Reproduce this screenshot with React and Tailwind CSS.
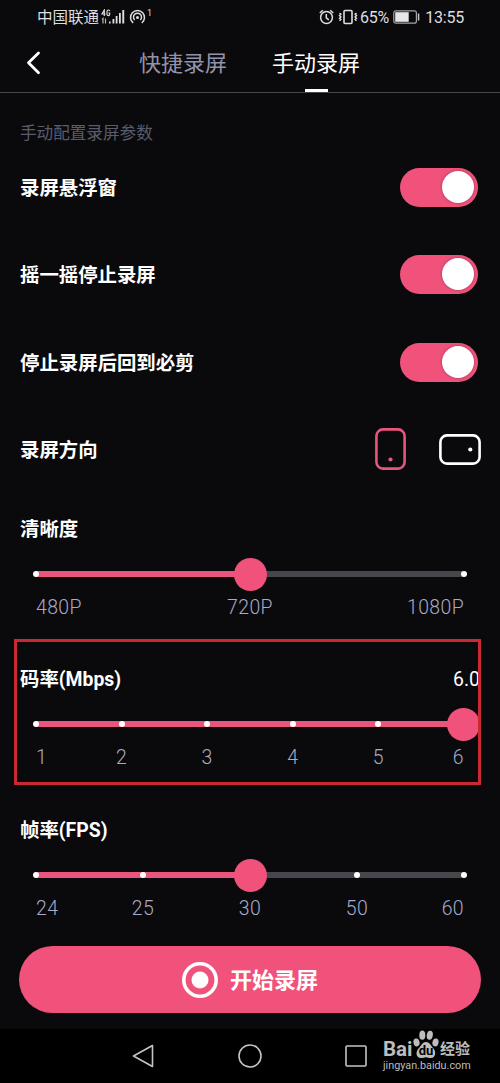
import { useState } from "react";

const SWITCHES = [
  { id: "float", label: "录屏悬浮窗", height: "h-[87px]" },
  { id: "shake", label: "摇一摇停止录屏", height: "h-[87px]" },
  { id: "back", label: "停止录屏后回到必剪", height: "h-[88px]" },
];

const StatusBar = () => (
  <div className="flex h-[34px] shrink-0 items-center justify-between pl-[37px] pr-[36px] text-[15.5px] text-[#dedee0]">
    <div className="flex items-center">
      <span className="pt-[3px] leading-none">中国联通</span>
      <svg width="24" height="16" viewBox="0 0 24 16" className="ml-[2px]">
        <g fill="none" stroke="#dedee0" strokeWidth="1.2">
          <path d="M3.3 7V1L1 5h3.5M8.8 2.2Q8.6 1 7.3 1 6 1 6 2.6v2.6q0 1.4 1.3 1.4 1.4 0 1.4-1.4V4H7.4" />
          <path d="M1 10.5l1-1v5M4.5 9.5v5" strokeOpacity=".8" />
        </g>
        <g fill="#dedee0">
          <rect x="8" y="12.5" width="1.6" height="2" />
          <rect x="11.5" y="10" width="1.8" height="4.5" />
          <rect x="14.7" y="7" width="1.8" height="7.5" />
          <rect x="18" y="4" width="1.8" height="10.5" />
          <rect x="21.3" y="1" width="1.9" height="13.5" />
        </g>
      </svg>
      <svg width="17" height="16" viewBox="0 0 17 16" className="ml-[4px]" fill="none" stroke="#dedee0" strokeWidth="1.5">
        <path d="M4.2 14A7 7 0 1 1 12.8 14" />
        <path d="M5.7 11A4 4 0 1 1 11.3 11" />
        <circle cx="8.5" cy="8.5" r="1.5" fill="#dedee0" stroke="none" />
      </svg>
      <span className="mb-2 ml-px text-[9px] leading-none">1</span>
    </div>
    <div className="flex items-center">
      <svg width="15" height="16" viewBox="0 0 15 16" fill="none" stroke="#dedee0" strokeWidth="1.5">
        <circle cx="7.5" cy="8.5" r="5.9" />
        <path d="M7.3 5v3.8l2.5 2M.8 4l3-2.8M14.2 4l-3-2.8" />
      </svg>
      <svg width="20" height="16" viewBox="0 0 20 16" className="ml-[4px]" fill="none" stroke="#dedee0">
        <rect x="6" y="1.5" width="8" height="13" rx="1" strokeWidth="1.6" />
        <path d="M1.5 4l1.4 1.3-1.4 1.3 1.4 1.3-1.4 1.3 1.4 1.3-1.4 1.3M18.5 4l-1.4 1.3 1.4 1.3-1.4 1.3 1.4 1.3-1.4 1.3 1.4 1.3" strokeWidth="1.4" />
      </svg>
      <span className="ml-[2px] pt-[2px] text-[16px] leading-none tracking-[-0.2px]">65%</span>
      <svg width="27" height="14" viewBox="0 0 27 14" className="ml-[4px]">
        <rect x=".8" y=".8" width="22.6" height="12.4" rx="2" fill="none" stroke="#a5a5a7" strokeWidth="1.2" />
        <rect x="2.2" y="2.2" width="13.5" height="9.6" fill="#e6e6e8" />
        <rect x="24.8" y="3.5" width="1.5" height="7" fill="#c5c5c7" />
      </svg>
      <span className="ml-[5px] pt-[2px] text-[16px] leading-none tracking-[-0.2px]">13:55</span>
    </div>
  </div>
);

const Header = () => (
  <header className="relative flex h-[59px] shrink-0 items-center border-b border-[#47474b] pl-[25px] text-[22px]">
    <svg width="18" height="24" viewBox="0 0 18 24" fill="none" stroke="#fff" strokeWidth="2.8" strokeLinecap="round" strokeLinejoin="round">
      <path d="M13.5 2L3.5 11.8l10 10" />
    </svg>
    <button className="ml-[96px] pt-px text-[#9293aa]">快捷录屏</button>
    <button className="ml-[45px] pt-px text-white">手动录屏</button>
    <span className="absolute bottom-0 left-[305px] h-[3px] w-[23px] bg-white" />
  </header>
);

const Switch = ({ checked, onChange }) => (
  <button
    role="switch"
    aria-checked={checked}
    onClick={onChange}
    className={`mr-[2px] flex h-[39px] w-[78px] items-center rounded-full px-1 pb-px ${
      checked ? "justify-end bg-[#f0527b]" : "justify-start bg-[#47464c]"
    }`}
  >
    <span className="h-8 w-8 rounded-full bg-white shadow-[0_0_3px_rgba(80,30,50,0.5)]" />
  </button>
);

const Slider = ({ title, value, marks, active, onSelect }) => {
  const percent = (active / (marks.length - 1)) * 100;

  return (
    <section className="h-[150px] shrink-0 overflow-hidden pt-[24px]">
      <div className="flex h-7 items-center justify-between text-[19.4px] text-white">
        <h2 className="font-bold">{title}</h2>
        {value && <span>{value}</span>}
      </div>
      <div className="mx-4 mt-[13px] grid h-[34px] items-center">
        <div className="col-start-1 row-start-1 h-[6px] bg-[#47464c]">
          <div className="h-full bg-[#e9557c]" style={{ width: `${percent}%` }} />
        </div>
        <div className="col-start-1 row-start-1 flex items-center justify-between">
          {marks.map((mark, i) => (
            <span key={mark} className="flex w-0 justify-center">
              <span
                className={`shrink-0 rounded-full ${
                  i === active ? "h-[33px] w-[33px] bg-[#f0527b]" : "h-[6px] w-[6px] bg-white"
                }`}
              />
            </span>
          ))}
        </div>
      </div>
      <div className="mx-4 mt-[6px] flex h-[22px] items-center justify-between text-[19.4px] font-light tracking-[0.4px] text-[#a9abc6]">
        {marks.map((mark, i) => (
          <button
            key={mark}
            onClick={() => onSelect(i)}
            className={`flex w-0 ${
              i === 0 ? "justify-start" : i === marks.length - 1 ? "justify-end" : "justify-center"
            }`}
          >
            {mark}
          </button>
        ))}
      </div>
    </section>
  );
};

const Watermark = () => (
  <div className="absolute right-[26px] top-0 flex w-[91px] flex-col text-[#bdbdbd]">
    <div className="flex h-[30px] items-end">
      <span className="w-[30px] text-[20.5px] font-bold leading-[20px]">Bai</span>
      <span className="relative h-[29px] w-[26px]">
        <svg width="26" height="29" viewBox="0 0 26 28" fill="#bdbdbd" preserveAspectRatio="none">
          <ellipse cx="3.5" cy="12" rx="3" ry="3.9" transform="rotate(-15 3.5 12)" />
          <ellipse cx="9.3" cy="5" rx="3" ry="4.4" />
          <ellipse cx="16.8" cy="5" rx="3" ry="4.4" transform="rotate(10 16.8 5)" />
          <ellipse cx="22.5" cy="12" rx="3" ry="3.9" transform="rotate(15 22.5 12)" />
          <path d="M13 11.5c3.5 0 4.8 3.5 7 5.8 3.8 3.5 2.5 9.5-2 9.7-2.2.1-3-.8-5-.8s-3 1-5 .8c-5-.2-6-6-2-9.7 2.4-2.3 3.5-5.8 7-5.8z" />
        </svg>
        <span className="absolute bottom-[1px] left-0 w-full text-center text-[13px] font-bold leading-[14px] text-black">du</span>
      </span>
      <span className="ml-[1px] whitespace-nowrap text-[15px] font-bold leading-[19px]">经验</span>
    </div>
    <span className="text-[10.8px] leading-[13px]">jingyan.baidu.com</span>
  </div>
);

const App = () => {
  const [enabled, setEnabled] = useState({ float: true, shake: true, back: true });
  const [portrait, setPortrait] = useState(true);
  const [quality, setQuality] = useState(1);
  const [bitrate, setBitrate] = useState(5);
  const [fps, setFps] = useState(2);

  const toggle = (id) => setEnabled((prev) => ({ ...prev, [id]: !prev[id] }));

  return (
    <div className="flex h-[1083px] w-[500px] flex-col overflow-hidden bg-[#0a0a0d] font-[Roboto,'Noto_Sans_CJK_SC',sans-serif]">
      <StatusBar />
      <Header />
      <main className="flex flex-col px-5">
        <p className="mt-[30px] h-[21px] text-[16.6px] leading-[22px] text-[#5b5c6b]">手动配置录屏参数</p>
        {SWITCHES.map((item) => (
          <div key={item.id} className={`flex items-center justify-between ${item.height}`}>
            <span className="pt-[3px] text-[19.4px] font-bold text-white">{item.label}</span>
            <Switch checked={enabled[item.id]} onChange={() => toggle(item.id)} />
          </div>
        ))}
        <div className="-mr-px flex h-[86px] items-center">
          <span className="mr-auto pt-[3px] text-[19.4px] font-bold text-white">录屏方向</span>
          <button onClick={() => setPortrait(true)} className={portrait ? "text-[#e9557c]" : "text-white"}>
            <svg width="31" height="42" viewBox="0 0 31 42" fill="none" stroke="currentColor" strokeWidth="2.6">
              <rect x="1.4" y="1.4" width="28.2" height="39.2" rx="6.5" />
              <circle cx="15.5" cy="31.5" r="2.1" fill="currentColor" stroke="none" />
            </svg>
          </button>
          <button onClick={() => setPortrait(false)} className={`ml-[33px] ${portrait ? "text-white" : "text-[#e9557c]"}`}>
            <svg width="42" height="31" viewBox="0 0 42 31" fill="none" stroke="currentColor" strokeWidth="2.6">
              <rect x="1.4" y="1.4" width="39.2" height="28.2" rx="6.5" />
              <circle cx="31.3" cy="15.5" r="2.1" fill="currentColor" stroke="none" />
            </svg>
          </button>
        </div>
        <Slider title="清晰度" marks={["480P", "720P", "1080P"]} active={quality} onSelect={setQuality} />
        <div className="relative">
          <Slider
            title="码率(Mbps)"
            value={`${bitrate + 1}.0`}
            marks={["1", "2", "3", "4", "5", "6"]}
            active={bitrate}
            onSelect={setBitrate}
          />
          <div className="pointer-events-none absolute -left-[6px] -right-[1px] -top-[3px] h-[146px] border-[3px] border-[#c92a31]" />
        </div>
        <div className="pt-px">
          <Slider title="帧率(FPS)" marks={["24", "25", "30", "50", "60"]} active={fps} onSelect={setFps} />
        </div>
      </main>
      <button className="mx-[19px] mt-[3px] flex h-[67px] shrink-0 items-center justify-center rounded-full bg-[#f0527b] text-[22px] font-bold text-white">
        <svg width="36" height="36" viewBox="0 0 36 36" className="mr-[12px]">
          <circle cx="18" cy="18" r="16.2" fill="none" stroke="#fff" strokeWidth="3.6" />
          <circle cx="18" cy="18" r="8.5" fill="#fff" />
        </svg>
        <span className="pt-[2px]">开始录屏</span>
      </button>
      <nav className="relative mt-auto flex h-[54px] shrink-0 items-center justify-center gap-[82px] bg-black">
        <svg width="24" height="24" viewBox="0 0 24 24" fill="none" stroke="#c4c4c4" strokeWidth="1.6" strokeLinejoin="round">
          <path d="M20.5 1.5v21L1.5 12z" />
        </svg>
        <svg width="24" height="24" viewBox="0 0 24 24" fill="none" stroke="#c4c4c4" strokeWidth="1.6">
          <circle cx="12" cy="12" r="11" />
        </svg>
        <svg width="24" height="24" viewBox="0 0 24 24" fill="none" stroke="#c4c4c4" strokeWidth="1.6">
          <rect x="2" y="2" width="20" height="20" rx="1" />
        </svg>
        <Watermark />
      </nav>
    </div>
  );
};

export default App;
